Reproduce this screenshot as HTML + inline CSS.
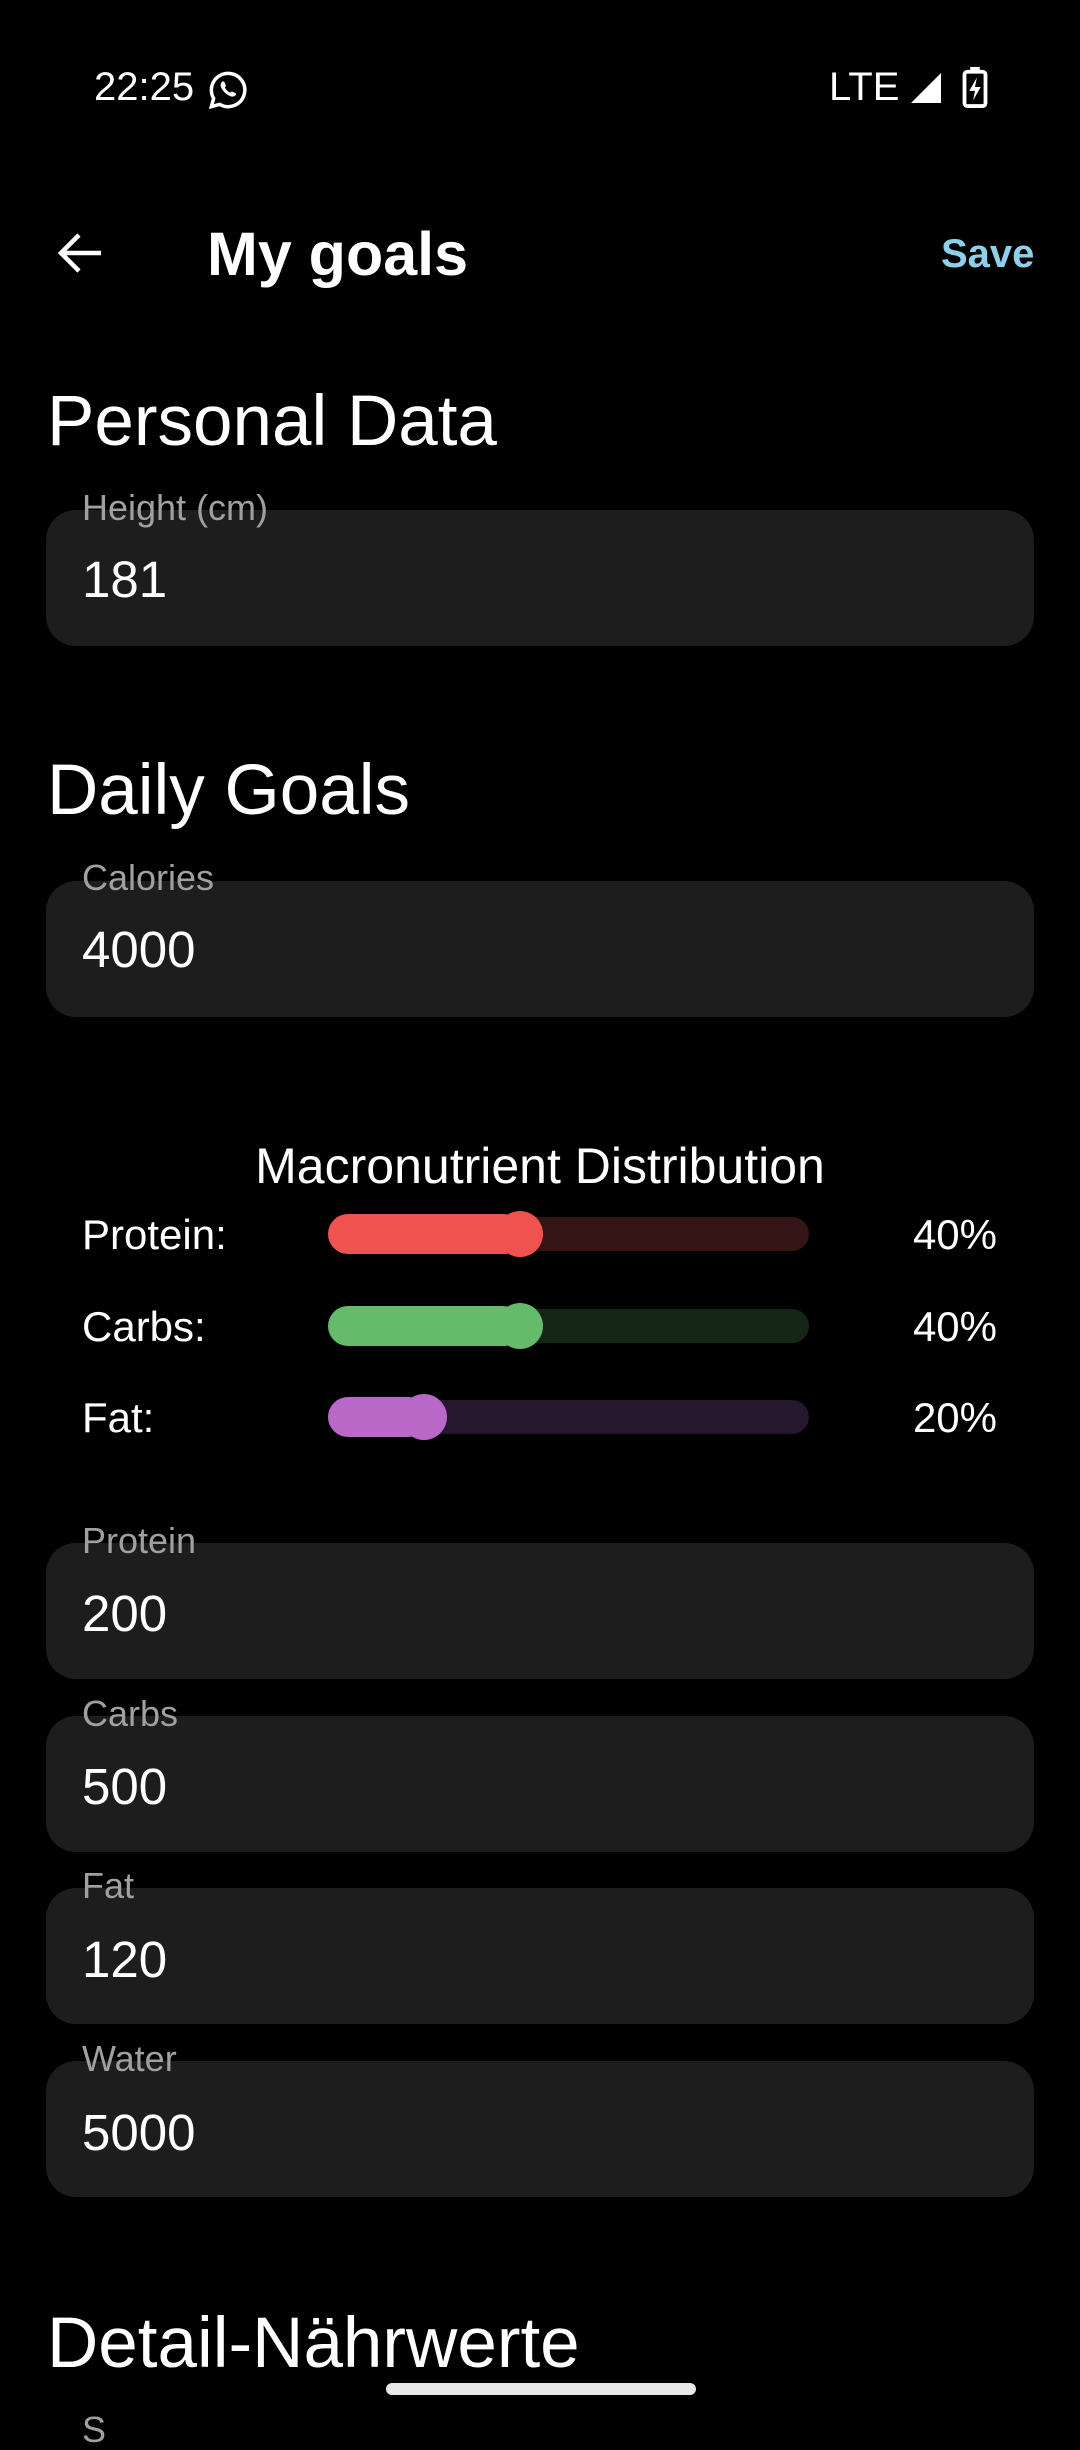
<!DOCTYPE html>
<html><head><meta charset="utf-8"><style>
body{margin:0;width:1080px;height:2424px;background:#000;color:#fff;font-family:"Liberation Sans",sans-serif;position:relative;overflow:hidden}
.a{position:absolute;white-space:nowrap}
.box{position:absolute;left:46px;width:988px;height:136px;background:#1d1d1d;border-radius:30px}
.lbl{position:absolute;left:82px;font-size:36px;color:#a0a0a0;line-height:1}
.val{position:absolute;left:82px;font-size:51px;line-height:1}
.h{position:absolute;left:47px;font-size:71px;line-height:1}
.tr{position:absolute;left:328px;width:481px;height:34px;border-radius:17px}
.ac{position:absolute;left:328px;height:40px;border-radius:20px}
.th{position:absolute;width:46px;height:46px;border-radius:50%}
.ml{position:absolute;left:82px;font-size:42px;line-height:1}
.pc{position:absolute;right:83px;font-size:42px;line-height:1}
</style></head><body>
<div class="a" style="left:94px;top:65px;font-size:40px">22:25</div>
<svg class="a" style="left:207px;top:69px" width="42" height="42" viewBox="0 0 24 24"><path d="M12 2.5a9.5 9.5 0 0 0-8.2 14.3L2.5 21.5l4.8-1.3A9.5 9.5 0 1 0 12 2.5z" fill="none" stroke="#fff" stroke-width="2"/><path d="M8.5 7.5c.5-.6 1.2-.5 1.5 0l.8 1.8c.1.4-.3.9-.6 1.2.6 1.3 1.7 2.4 3 3 .3-.3.8-.8 1.2-.6l1.8.8c.5.3.6 1-.1 1.5-1 .9-2.6.7-4.4-.5-1.8-1.2-3.2-2.9-3.8-4.6-.3-1-.1-2 .6-2.6z" fill="#fff"/></svg>
<div class="a" style="left:829px;top:65px;font-size:40px">LTE</div>
<svg class="a" style="left:908px;top:70px" width="36" height="36" viewBox="0 0 24 24"><path d="M22 2L2 22h20z" fill="#fff"/></svg>
<svg class="a" style="left:961px;top:66px" width="28" height="42" viewBox="0 0 14 22"><rect x="1.5" y="3" width="11" height="18" rx="1.5" fill="none" stroke="#fff" stroke-width="2"/><rect x="4.5" y="0.5" width="5" height="3" fill="#fff"/><path d="M8 6L4 13h3l-1 5 4-7H7z" fill="#fff"/></svg>
<svg class="a" style="left:55px;top:230px" width="50" height="46" viewBox="0 0 50 46"><path d="M46 23H6M24 5L6 23l18 18" fill="none" stroke="#fff" stroke-width="4.5"/></svg>
<div class="a" style="left:207px;top:219px;font-size:61px;font-weight:bold">My goals</div>
<div class="a" style="left:941px;top:232px;font-size:40px;font-weight:bold;color:#8ecfea">Save</div>

<div class="h" style="top:386px">Personal Data</div>
<div class="box" style="top:510px"></div><div class="lbl" style="top:490px">Height (cm)</div><div class="val" style="top:554px">181</div>

<div class="h" style="top:755px">Daily Goals</div>
<div class="box" style="top:881px"></div><div class="lbl" style="top:860px">Calories</div><div class="val" style="top:924px">4000</div>

<div class="a" style="left:0;width:1080px;text-align:center;top:1137px;font-size:50px">Macronutrient Distribution</div>
<div class="ml" style="top:1214px">Protein:</div><div class="pc" style="top:1214px">40%</div>
<div class="tr" style="top:1217px;background:#341414"></div><div class="ac" style="top:1214px;width:195px;background:#ef5350"></div><div class="th" style="left:497px;top:1211px;background:#ef5350"></div>
<div class="ml" style="top:1306px">Carbs:</div><div class="pc" style="top:1306px">40%</div>
<div class="tr" style="top:1309px;background:#152617"></div><div class="ac" style="top:1306px;width:195px;background:#66bb6a"></div><div class="th" style="left:497px;top:1303px;background:#66bb6a"></div>
<div class="ml" style="top:1397px">Fat:</div><div class="pc" style="top:1397px">20%</div>
<div class="tr" style="top:1400px;background:#26172c"></div><div class="ac" style="top:1397px;width:100px;background:#ba68c8"></div><div class="th" style="left:401px;top:1394px;background:#ba68c8"></div>

<div class="box" style="top:1543px"></div><div class="lbl" style="top:1523px">Protein</div><div class="val" style="top:1588px">200</div>
<div class="box" style="top:1716px"></div><div class="lbl" style="top:1696px">Carbs</div><div class="val" style="top:1761px">500</div>
<div class="box" style="top:1888px"></div><div class="lbl" style="top:1868px">Fat</div><div class="val" style="top:1934px">120</div>
<div class="box" style="top:2061px"></div><div class="lbl" style="top:2041px">Water</div><div class="val" style="top:2107px">5000</div>

<div class="h" style="top:2308px">Detail-Nährwerte</div>
<div class="lbl" style="top:2412px">S</div>
<div class="a" style="left:386px;top:2383px;width:310px;height:12px;border-radius:6px;background:#e8e8e8"></div>
</body></html>
